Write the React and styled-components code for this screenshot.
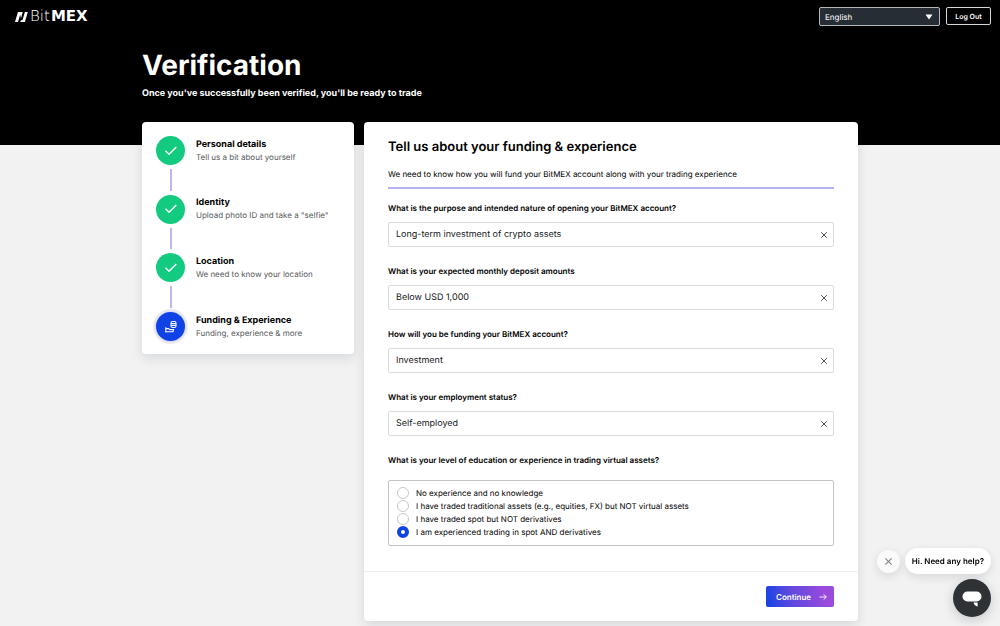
import React, { useState } from 'react';
import styled, { createGlobalStyle, css } from 'styled-components';

const steps = [
    { title: 'Personal details', text: 'Tell us a bit about yourself', done: true },
    { title: 'Identity', text: 'Upload photo ID and take a "selfie"', done: true },
    { title: 'Location', text: 'We need to know your location', done: true },
    { title: 'Funding & Experience', text: 'Funding, experience & more', done: false },
];

const questions = [
    { id: 'purpose', label: 'What is the purpose and intended nature of opening your BitMEX account?', value: 'Long-term investment of crypto assets' },
    { id: 'deposit', label: 'What is your expected monthly deposit amounts', value: 'Below USD 1,000' },
    { id: 'funding', label: 'How will you be funding your BitMEX account?', value: 'Investment' },
    { id: 'employment', label: 'What is your employment status?', value: 'Self-employed' },
];

const levels = [
    'No experience and no knowledge',
    'I have traded traditional assets (e.g., equities, FX) but NOT virtual assets',
    'I have traded spot but NOT derivatives',
    'I am experienced trading in spot AND derivatives',
];

function LogoMark(){
    return (
        <svg width="13" height="10" viewBox="0 0 13 10" fill="#fff" aria-hidden="true">
            <path d="M2.9 0H7.7L6 6.4L5.2 2.8L3 10H0z" />
            <path d="M9.9 0H12.8L9.9 10H5.2L6 8.2H7.4z" />
        </svg>
    );
}

function CheckIcon(){
    return (
        <svg width="14" height="14" viewBox="0 0 14 14" fill="none" stroke="#fff" strokeWidth="1.4" aria-hidden="true">
            <path d="M1.5 6.8L5 10.2L12.3 3" />
        </svg>
    );
}

function FundingIcon(){
    return (
        <svg width="14" height="14" viewBox="0 0 14 14" fill="none" stroke="#fff" strokeWidth="1.1" aria-hidden="true">
            <rect x="7" y="1.5" width="5" height="6" rx="1.6" />
            <path d="M7.2 3.6H11.8M7.2 5.5H11.8" />
            <path d="M1.8 7.2V12.4M1.8 11.7H9L9.6 9.6H6L4.4 8.6H1.8" />
        </svg>
    );
}

function CrossIcon({ size, color }){
    return (
        <svg width={size} height={size} viewBox="0 0 8 8" fill="none" stroke={color} strokeWidth="1" aria-hidden="true">
            <path d="M1.2 1.2L6.8 6.8M6.8 1.2L1.2 6.8" />
        </svg>
    );
}

function Question({ id, label, value }){
    const [answer, setAnswer] = useState(value);

    return (
        <Field>
            <Label htmlFor={id}>{label}</Label>
            <InputBox>
                <Input id={id} value={answer} onChange={(e) => setAnswer(e.target.value)} />
                <ClearBtn type="button" aria-label="Clear" onClick={() => setAnswer('')}>
                    <CrossIcon size="8" color="#4a4f54" />
                </ClearBtn>
            </InputBox>
        </Field>
    );
}

function App(){
    const [level, setLevel] = useState(3);
    const [helpOpen, setHelpOpen] = useState(true);

    return (
        <>
            <GlobalStyle />
            <Hero>
                <TopBar>
                    <Logo href="#">
                        <LogoMark />
                        <LogoName>Bit<b>MEX</b></LogoName>
                    </Logo>
                    <TopActions>
                        <LanguageBox>
                            <Language aria-label="Language" defaultValue="en">
                                <option value="en">English</option>
                            </Language>
                            <Caret width="8" height="6" viewBox="0 0 8 6" aria-hidden="true">
                                <path d="M0.5 0.5H7.5L4 5.5z" fill="#fff" />
                            </Caret>
                        </LanguageBox>
                        <LogOut type="button">Log Out</LogOut>
                    </TopActions>
                </TopBar>
                <Container>
                    <Title>Verification</Title>
                    <Subtitle>Once you've successfully been verified, you'll be ready to trade</Subtitle>
                </Container>
            </Hero>

            <Columns as="main">
                <StepCard>
                    {steps.map((step, i) => (
                        <React.Fragment key={step.title}>
                            {i > 0 && <Connector />}
                            <Step>
                                <StepIcon $done={step.done}>
                                    {step.done ? <CheckIcon /> : <FundingIcon />}
                                </StepIcon>
                                <div>
                                    <StepTitle>{step.title}</StepTitle>
                                    <StepText>{step.text}</StepText>
                                </div>
                            </Step>
                        </React.Fragment>
                    ))}
                </StepCard>

                <FormCard>
                    <FormBody>
                        <FormTitle>Tell us about your funding &amp; experience</FormTitle>
                        <Intro>We need to know how you will fund your BitMEX account along with your trading experience</Intro>
                        {questions.map((q) => <Question key={q.id} {...q} />)}
                        <Label as="div" id="level-label">What is your level of education or experience in trading virtual assets?</Label>
                        <RadioBox role="radiogroup" aria-labelledby="level-label">
                            {levels.map((text, i) => (
                                <RadioRow key={text}>
                                    <Radio type="radio" name="level" checked={level === i} onChange={() => setLevel(i)} />
                                    {text}
                                </RadioRow>
                            ))}
                        </RadioBox>
                    </FormBody>
                    <FormFooter>
                        <ContinueBtn type="button">
                            Continue
                            <svg width="8" height="8" viewBox="0 0 8 8" fill="none" stroke="#fff" strokeWidth="0.9" aria-hidden="true">
                                <path d="M0.5 4H7.3M4.6 1.3L7.3 4L4.6 6.7" />
                            </svg>
                        </ContinueBtn>
                    </FormFooter>
                </FormCard>
            </Columns>

            <Chat>
                {helpOpen && (
                    <HelpRow>
                        <HelpClose type="button" aria-label="Close" onClick={() => setHelpOpen(false)}>
                            <CrossIcon size="9" color="#808488" />
                        </HelpClose>
                        <HelpBubble>Hi. Need any help?</HelpBubble>
                    </HelpRow>
                )}
                <Launcher type="button" aria-label="Open chat">
                    <svg width="20" height="16" viewBox="0 0 20 16" fill="#fff" aria-hidden="true">
                        <rect x="0.5" y="0.5" width="19" height="10" rx="5" />
                        <path d="M11.5 11.6H15.6V15.6C13.6 15.2 12 13.8 11.5 11.6z" />
                    </svg>
                </Launcher>
            </Chat>
        </>
    );
}

const GlobalStyle = createGlobalStyle`
*{
    box-sizing: border-box;
}
body{
    margin: 0;
    background-color: #f2f2f2;
    color: #000;
    font-family: Inter, "Liberation Sans", sans-serif;
    font-size: 8px;
    text-rendering: geometricPrecision;
    overflow: hidden auto;
    scrollbar-width: none;
}
button, input, select{
    font-family: inherit;
    text-rendering: inherit;
    margin: 0;
}
h1, h2, h3, p{
    margin: 0;
}
`

const Hero = styled.header`
background-color: #000;
color: #fff;
padding-bottom: 45px;
`

const TopBar = styled.div`
display: flex;
align-items: flex-start;
justify-content: space-between;
padding: 7px 9px 0 15px;
`

const Logo = styled.a`
display: flex;
align-items: center;
gap: 2px;
height: 19px;
color: #fff;
text-decoration: none;
`

const LogoName = styled.span`
font-family: "DejaVu Sans", sans-serif;
font-size: 15px;
font-weight: 200;
line-height: 19px;
b{
    margin-left: 1px;
    font-weight: 700;
}
`

const TopActions = styled.div`
display: flex;
align-items: flex-start;
gap: 6px;
`

const LanguageBox = styled.div`
position: relative;
width: 121px;
`

const Language = styled.select`
appearance: none;
display: block;
width: 100%;
height: 19px;
padding: 0 5px;
border: 1px solid #b5b8bb;
border-radius: 2px;
background-color: #272d35;
color: #fff;
font-size: 8px;
`

const Caret = styled.svg`
position: absolute;
right: 7px;
top: 7px;
pointer-events: none;
`

const LogOut = styled.button`
width: 45px;
height: 18px;
padding: 0;
border: 1px solid #d5d5d5;
border-radius: 2px;
background: none;
color: #fff;
font-size: 7px;
font-weight: 600;
`

const Container = styled.div`
width: 100%;
max-width: 716px;
margin: 0 auto;
`

const Title = styled.h1`
margin-top: 20px;
font-size: 28px;
font-weight: 700;
line-height: 38px;
`

const Subtitle = styled.p`
margin-top: 3px;
font-size: 9px;
font-weight: 700;
line-height: 13px;
`

const Columns = styled(Container)`
display: flex;
align-items: flex-start;
gap: 10px;
margin-top: -23px;
padding-bottom: 5px;
`

const Card = styled.section`
background-color: #fff;
border-radius: 4px;
box-shadow: 0 4px 12px rgba(20, 30, 50, 0.12);
`

const StepCard = styled(Card)`
display: flex;
flex-direction: column;
flex: 0 0 212px;
min-height: 232px;
padding: 14px 14px 13px;
`

const Step = styled.div`
display: flex;
align-items: center;
gap: 11px;
`

const StepIcon = styled.div`
display: flex;
align-items: center;
justify-content: center;
flex: none;
width: 29px;
height: 29px;
border-radius: 50%;
background-color: #13ca81;
${(props) => !props.$done && css`
    background-color: #1043e5;
    box-shadow: 0 0 0 1px #dcd8fa, 0 0 0 3px #ebebef;
`}
`

const StepTitle = styled.h3`
font-size: 9px;
font-weight: 700;
line-height: 13px;
`

const StepText = styled.p`
color: #56595c;
font-size: 8px;
line-height: 13px;
`

const Connector = styled.div`
flex: 1;
width: 2px;
margin: 4px 0 4px 14px;
background-color: #bbb6f4;
`

const FormCard = styled(Card)`
flex: 1;
`

const FormBody = styled.div`
padding: 16px 24px 25px;
`

const FormTitle = styled.h2`
font-size: 13px;
font-weight: 600;
line-height: 18px;
`

const Intro = styled.p`
margin-bottom: 13px;
padding: 12px 0 6px;
border-bottom: 2px solid #b7b2f6;
font-size: 8px;
line-height: 13px;
`

const Field = styled.div`
margin-bottom: 18px;
`

const Label = styled.label`
display: block;
margin-bottom: 7px;
font-size: 8px;
font-weight: 600;
line-height: 13px;
`

const InputBox = styled.div`
display: flex;
align-items: center;
height: 25px;
padding-left: 7px;
border: 1px solid #dcdcdc;
border-radius: 2px;
`

const Input = styled.input`
flex: 1;
min-width: 0;
padding: 0;
border: none;
outline: none;
background: none;
color: #15181b;
font-size: 9px;
`

const ClearBtn = styled.button`
display: flex;
padding: 5px;
border: none;
background: none;
cursor: pointer;
`

const RadioBox = styled.div`
margin-top: 13px;
padding: 5px 8px 7px;
border: 1px solid #c4c4c4;
border-radius: 2px;
`

const RadioRow = styled.label`
display: flex;
align-items: center;
gap: 7px;
height: 13px;
`

const Radio = styled.input`
appearance: none;
flex: none;
width: 12px;
height: 12px;
border: 1px solid #c9c9c9;
border-radius: 50%;
background-color: #fff;
&:checked{
    border: 4px solid #1043e5;
}
`

const FormFooter = styled.div`
display: flex;
justify-content: flex-end;
padding: 14px 24px;
border-top: 1px solid #efefef;
`

const ContinueBtn = styled.button`
display: flex;
align-items: center;
justify-content: space-between;
width: 68px;
height: 21px;
padding: 0 7px 0 10px;
border: none;
border-radius: 2px;
background: linear-gradient(75deg, #1043e5 0%, #5a48e0 35%, #9a4bdc 85%);
color: #fff;
font-size: 8px;
font-weight: 600;
`

const Chat = styled.aside`
position: fixed;
right: 9px;
bottom: 9px;
display: flex;
flex-direction: column;
align-items: flex-end;
gap: 5px;
`

const HelpRow = styled.div`
display: flex;
align-items: center;
gap: 5px;
`

const HelpClose = styled.button`
display: flex;
align-items: center;
justify-content: center;
width: 23px;
height: 23px;
padding: 0;
border: none;
border-radius: 50%;
background-color: #fafafa;
box-shadow: 0 3px 10px rgba(20, 30, 50, 0.12);
`

const HelpBubble = styled.div`
padding: 0 7px;
border-radius: 13px;
background-color: #fff;
box-shadow: 0 3px 10px rgba(20, 30, 50, 0.12);
font-size: 8px;
font-weight: 600;
line-height: 26px;
`

const Launcher = styled.button`
display: flex;
align-items: center;
justify-content: center;
width: 38px;
height: 38px;
padding: 2px 0 0;
border: none;
border-radius: 50%;
background-color: #2f3235;
box-shadow: 0 3px 12px rgba(20, 30, 50, 0.2);
`

export default App;
